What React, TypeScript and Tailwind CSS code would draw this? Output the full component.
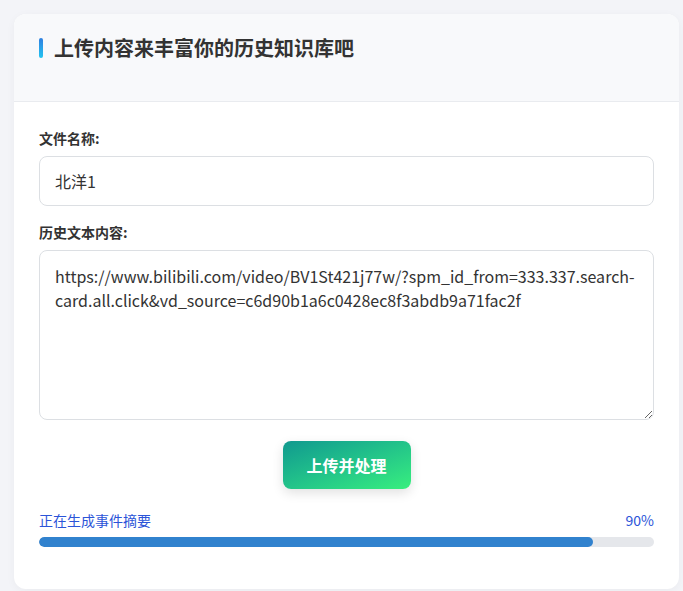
import React from 'react';

const font = { fontFamily: '"Noto Sans CJK SC", "Noto Sans", sans-serif' };

export default function App() {
  const progress = 90;
  return (
    <div className="min-h-[591px] bg-[#f3f4f8] pt-[14px] pl-[14px]" style={font}>
      <div className="w-[665px] h-[575px] bg-white rounded-[12px] overflow-hidden shadow-[0_2px_10px_rgba(0,0,0,0.04)]">
        <div className="h-[88px] bg-[#f8f9fb] border-b border-[#e9ebef] px-[25px] pt-[20px]">
          <div className="flex items-center gap-[11px]">
            <span className="w-[4px] h-[20px] rounded-full bg-gradient-to-b from-[#2f7fe0] to-[#22c4f0]" />
            <h2 className="text-[20px] font-bold text-[#333] leading-[28px]">上传内容来丰富你的历史知识库吧</h2>
          </div>
        </div>
        <div className="px-[25px] pt-[26px]">
          <label className="block text-[14px] font-bold text-[#333] leading-[20px] mb-[8px]">文件名称:</label>
          <input
            type="text"
            defaultValue="北洋1"
            className="block w-full h-[50px] border border-[#dcdfe3] rounded-[8px] px-[15px] text-[16px] text-[#333] outline-none"
          />
          <label className="block text-[14px] font-bold text-[#333] leading-[20px] mt-[16px] mb-[8px]">历史文本内容:</label>
          <textarea
            defaultValue="https://www.bilibili.com/video/BV1St421j77w/?spm_id_from=333.337.search-card.all.click&vd_source=c6d90b1a6c0428ec8f3abdb9a71fac2f"
            className="block w-full h-[170px] border border-[#dcdfe3] rounded-[8px] px-[15px] py-[13px] text-[16px] leading-[24px] text-[#333] outline-none"
          />
          <div className="flex justify-center mt-[21px]">
            <button
              type="button"
              className="w-[128px] h-[48px] rounded-[8px] bg-gradient-to-br from-[#11998e] to-[#38ef7d] text-white text-[16px] font-bold shadow-[0_4px_12px_rgba(0,0,0,0.12)]"
            >
              上传并处理
            </button>
          </div>
          <div className="mt-[21px] flex justify-between text-[14px] leading-[20px] text-[#2b54d8]">
            <span>正在生成事件摘要</span>
            <span>{progress}%</span>
          </div>
          <div className="mt-[7px] h-[10px] rounded-full bg-[#e5e7eb] overflow-hidden">
            <div className="h-full rounded-full bg-[#3182ce]" style={{ width: `${progress}%` }} />
          </div>
        </div>
      </div>
    </div>
  );
}
